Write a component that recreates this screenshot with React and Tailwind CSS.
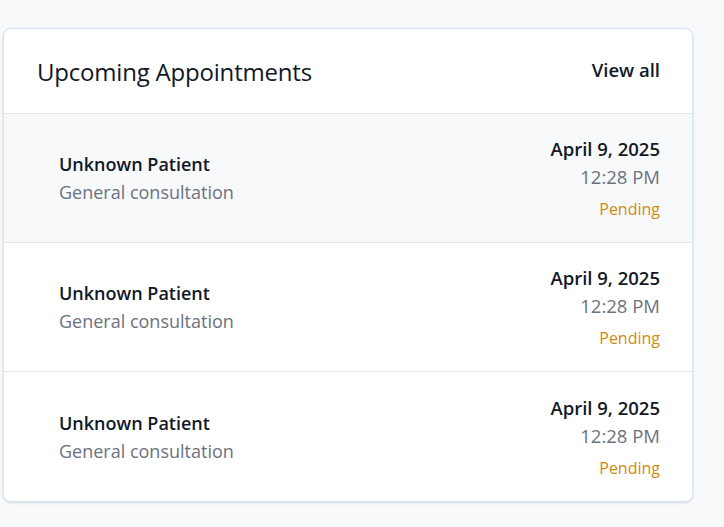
export default function App() {
  const rows = [0, 1, 2];
  return (
    <div
      className="min-h-[527px] bg-[#f8f9fb] pt-[28px] pl-[3px]"
      style={{ fontFamily: '"Open Sans", "Noto Sans", sans-serif' }}
    >
      <div className="w-[690px] rounded-lg border border-[#d3e2f8] bg-white shadow-[0_1px_3px_rgba(0,0,0,0.12)] overflow-hidden">
        <div className="flex items-center justify-between h-[85px] pl-[33px] pr-[32px] border-b border-[#e5e7eb]">
          <h2 className="text-[24px] font-medium text-[#111827] tracking-[-0.2px] mt-[1px]">Upcoming Appointments</h2>
          <a className="text-[18.5px] font-semibold text-[#111827] -mt-[3px]">View all</a>
        </div>
        {rows.map((i) => (
          <div
            key={i}
            className={
              "flex items-center justify-between h-[129px] pl-[55px] pr-[32px] " +
              (i === 0 ? "bg-[#f8f9fb] " : "bg-white ") +
              (i < 2 ? "border-b border-[#e5e7eb]" : "")
            }
          >
            <div className="flex flex-col leading-[28px]">
              <span className="text-[18px] font-semibold text-[#111827]">Unknown Patient</span>
              <span className="text-[18px] text-[#6b7280]">General consultation</span>
            </div>
            <div className="flex flex-col items-end">
              <span className="text-[18.5px] font-semibold text-[#111827] leading-[28px]">April 9, 2025</span>
              <span className="text-[18.5px] text-[#6b7280] leading-[28px]">12:28 PM</span>
              <span className="text-[16px] text-[#d08a10] leading-[24px] mt-[6px]">Pending</span>
            </div>
          </div>
        ))}
      </div>
    </div>
  );
}
